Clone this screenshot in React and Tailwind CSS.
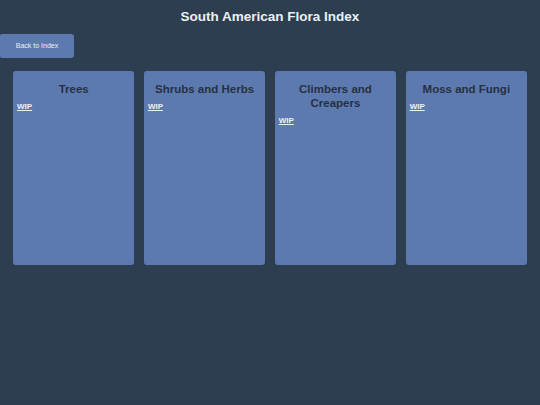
const categories = ['Trees', 'Shrubs and Herbs', 'Climbers and Creapers', 'Moss and Fungi'];

export default function App() {
  return (
    <div className="min-h-[405px] w-full bg-[#2c3e50] font-['Liberation_Sans',Arial,sans-serif]">
      <h1 className="pt-[8px] text-center text-[13.5px] font-bold leading-[17px] text-[#ecf0f1]">
        South American Flora Index
      </h1>
      <button className="mt-[9px] h-[24px] w-[74px] rounded-r-[3px] rounded-l-[2px] bg-[#5d7ab0] text-[7px] text-[#ecf0f1]">
        Back to Index
      </button>
      <div className="mt-[13px] grid grid-cols-4 gap-[9.5px] px-[13px]">
        {categories.map((name) => (
          <div key={name} className="h-[194px] rounded-[3px] bg-[#5d7ab0] px-[4px] pt-[11px]">
            <h2 className="px-[2px] text-center text-[11.5px] font-bold leading-[14px] text-[#253142]">{name}</h2>
            <a href="#" className="mt-[6px] block text-[8px] font-bold leading-[10px] text-[#ecf0f1] underline">
              WIP
            </a>
          </div>
        ))}
      </div>
    </div>
  );
}
